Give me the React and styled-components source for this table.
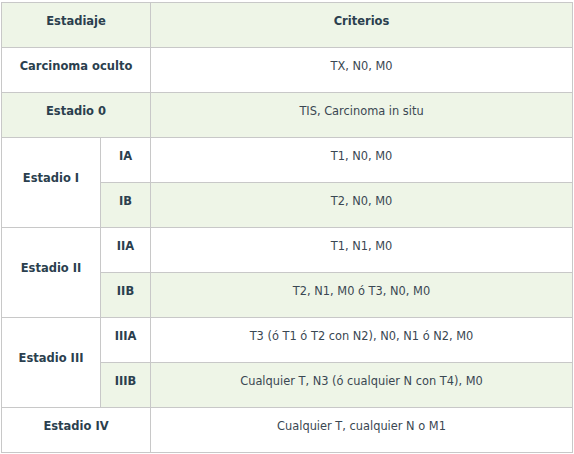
import React from "react";
import styled, { createGlobalStyle } from "styled-components";

const Global = createGlobalStyle`
  html, body { margin: 0; padding: 0; background: #ffffff; }
  body { font-family: "DejaVu Sans", Verdana, sans-serif; }
`;

const Wrap = styled.div`
  padding: 2px 0 0 1px;
`;

const Table = styled.table`
  border-collapse: collapse;
  table-layout: fixed;
  width: 572px;
  font-family: "DejaVu Sans", Verdana, sans-serif;
  font-size: 11.4px;
  color: #3b4650;
`;

const Cell = styled.td`
  border: 1px solid #c8c8c8;
  height: 45px;
  box-sizing: border-box;
  padding: 0 4px 9px;
  text-align: center;
  vertical-align: middle;
  line-height: 14px;
  background: ${(p) => (p.$shade ? "#eef5e7" : "#ffffff")};
  font-weight: ${(p) => (p.$bold ? 700 : 400)};
  font-size: ${(p) => (p.$bold ? "11.5px" : "11.4px")};
  color: ${(p) => (p.$bold ? "#2b3f4e" : "#3a4752")};
`;

const HeadCell = styled(Cell).attrs({ as: "th" })``;

const rows = [
  { stage: "Carcinoma oculto", crit: "TX, N0, M0", shade: false },
  { stage: "Estadio 0", crit: "TIS, Carcinoma in situ", shade: true },
  {
    stage: "Estadio I",
    subs: [
      { sub: "IA", crit: "T1, N0, M0", shade: false },
      { sub: "IB", crit: "T2, N0, M0", shade: true },
    ],
  },
  {
    stage: "Estadio II",
    subs: [
      { sub: "IIA", crit: "T1, N1, M0", shade: false },
      { sub: "IIB", crit: "T2, N1, M0 ó T3, N0, M0", shade: true },
    ],
  },
  {
    stage: "Estadio III",
    subs: [
      { sub: "IIIA", crit: "T3 (ó T1 ó T2 con N2), N0, N1 ó N2, M0", shade: false },
      { sub: "IIIB", crit: "Cualquier T, N3 (ó cualquier N con T4), M0", shade: true },
    ],
  },
  { stage: "Estadio IV", crit: "Cualquier T, cualquier N o M1", shade: false },
];

export default function App() {
  return (
    <Wrap>
      <Global />
      <Table>
        <colgroup>
          <col style={{ width: 99 }} />
          <col style={{ width: 50 }} />
          <col />
        </colgroup>
        <thead>
          <tr>
            <HeadCell $bold $shade colSpan={2}>Estadiaje</HeadCell>
            <HeadCell $bold $shade>Criterios</HeadCell>
          </tr>
        </thead>
        <tbody>
          {rows.map((r) =>
            r.subs ? (
              r.subs.map((s, i) => (
                <tr key={s.sub}>
                  {i === 0 && (
                    <Cell $bold rowSpan={r.subs.length}>
                      {r.stage}
                    </Cell>
                  )}
                  <Cell $bold $shade={s.shade}>{s.sub}</Cell>
                  <Cell $shade={s.shade}>{s.crit}</Cell>
                </tr>
              ))
            ) : (
              <tr key={r.stage}>
                <Cell $bold $shade={r.shade} colSpan={2}>{r.stage}</Cell>
                <Cell $shade={r.shade}>{r.crit}</Cell>
              </tr>
            )
          )}
        </tbody>
      </Table>
    </Wrap>
  );
}
